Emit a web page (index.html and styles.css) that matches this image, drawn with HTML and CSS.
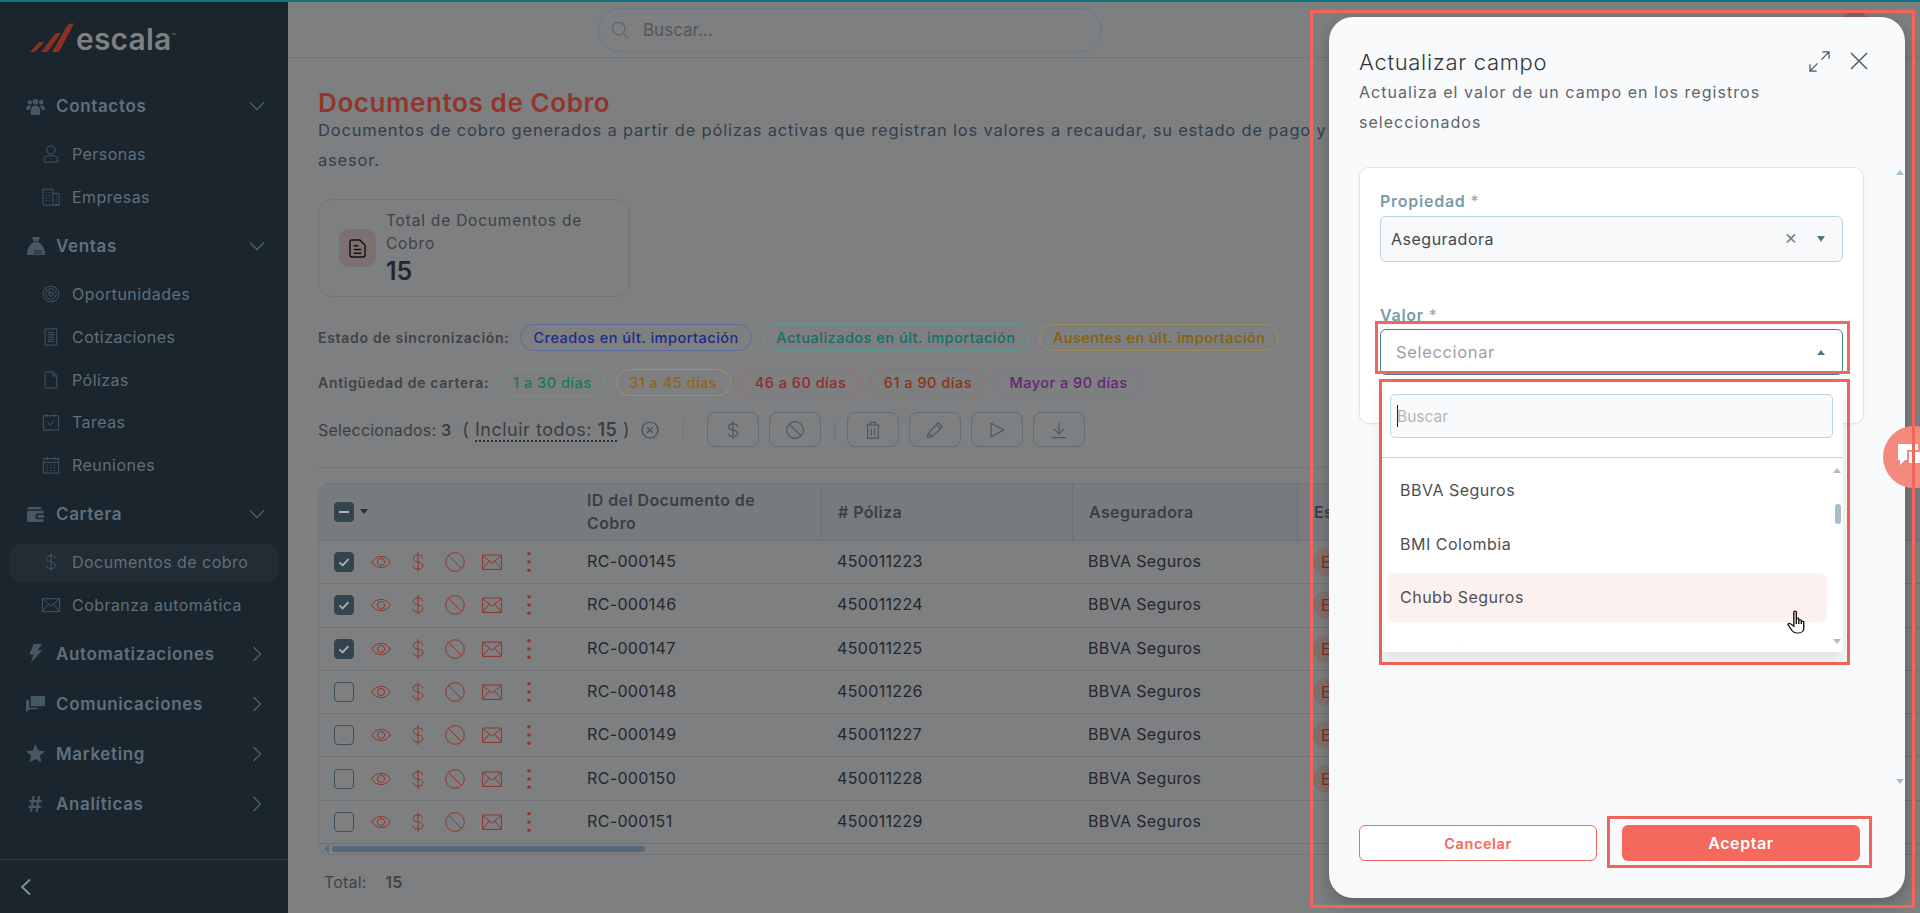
FILE: index.html
```html
<!DOCTYPE html>
<html lang="es">
<head>
<meta charset="utf-8">
<title>Documentos de Cobro</title>
<link rel="stylesheet" href="styles.css">
</head>
<body>
<svg class="sprite" aria-hidden="true">
  <symbol id="i-eye" viewBox="0 0 20 20"><path d="M.7 10C3 6.200 6.200 4.400 10 4.400s7 1.800 9.300 5.600c-2.300 3.800-5.500 5.600-9.300 5.600S3 13.800.7 10z"/><circle cx="10" cy="10" r="3.600"/></symbol>
  <symbol id="i-dollar" viewBox="0 0 20 20"><path d="M14.800 6.200C14.500 3.900 12.500 2.900 10 2.900c-2.700 0-4.800 1.300-4.800 3.500 0 2.300 2 3 4.800 3.600 2.900.6 5 1.400 5 3.700 0 2.300-2.200 3.500-5 3.500-2.700 0-4.800-1.200-5.100-3.500M10 0v20"/></symbol>
  <symbol id="i-ban" viewBox="0 0 20 20"><circle cx="10" cy="10" r="9.300"/><path d="M3.500 3.500l13 13"/></symbol>
  <symbol id="i-mail" viewBox="0 0 20 20"><path d="M.6 3h18.800v14.400H.6zM.6 3.400L10 11.200l9.400-7.800M.8 17l6.400-7.800M19.200 17l-6.400-7.800"/></symbol>
  <symbol id="i-dots" viewBox="0 0 20 20"><circle cx="10" cy="1.800" r="1.800"/><circle cx="10" cy="10" r="1.800"/><circle cx="10" cy="18.200" r="1.800"/></symbol>
  <symbol id="i-chev-d" viewBox="0 0 16 10"><path d="M1 1.500l7 7 7-7"/></symbol>
  <symbol id="i-chev-r" viewBox="0 0 10 16"><path d="M1.500 1l7 7-7 7"/></symbol>
  <symbol id="i-check" viewBox="0 0 20 20"><path d="M5 10.500l3.400 3.300L15 6.800"/></symbol>
</svg>

<div class="top-accent"></div>
<div class="shell">
  <aside class="sidebar">
    <div class="logo">
      <svg class="logo-mark" viewBox="0 0 44 30"><path d="M0 29L9 19H14L7 27Q5.500 29 3 29zM11 29L25 11Q26 10 28 10H31L19 27Q17.500 29 15 29zM22 29L37 3Q38.500 .5 41 .5H44L30 27Q29 29 26 29z"/></svg>
      <span class="logo-word">escala</span><span class="logo-tm">™</span>
    </div>
    <nav class="nav">
      <a class="sec">
        <svg class="sec-ico" viewBox="0 0 20 20"><circle cx="4" cy="5.500" r="2.300"/><circle cx="16" cy="5.500" r="2.300"/><circle cx="10" cy="5" r="3"/><path d="M0 13c0-2.500 1.200-4 3.500-4 .7 0 1.300.1 1.800.4C4.500 10.500 4 12 4 13.500H0zM20 13c0-2.500-1.200-4-3.500-4-.7 0-1.300.1-1.800.4.800 1.100 1.300 2.600 1.300 4.100h4zM5 18v-3.500C5 11.500 7 9 10 9s5 2.500 5 5.500V18c0 .6-.4 1-1 1H6c-.6 0-1-.4-1-1z"/></svg>
        <span>Contactos</span><svg class="chev"><use href="#i-chev-d"/></svg>
      </a>
      <div class="group">
        <a class="sub"><svg class="sub-ico" viewBox="0 0 20 20"><circle cx="10" cy="5.500" r="4.500"/><path d="M2.500 19v-3c0-2.500 1.500-4 4-4h7c2.500 0 4 1.500 4 4v3z"/></svg><span>Personas</span></a>
        <a class="sub"><svg class="sub-ico" viewBox="0 0 20 20"><path d="M1 19V1.500h11V19M12 6h7v13H12M1 19h18M4 5h1.500M7.500 5H9M4 8h1.500M7.500 8H9M4 11h1.500M7.500 11H9M4 14h1.500M7.500 14H9M15 9h1.500M15 12h1.500M15 15h1.500"/></svg><span>Empresas</span></a>
      </div>
      <a class="sec">
        <svg class="sec-ico wide" viewBox="0 0 22 20"><path d="M6.500 0h9l-2 5h-5zM8 6h6c3.500 2 6.500 6 7 13.500 0 .3-.2.500-.5.500h-19c-.3 0-.5-.2-.5-.5C1.500 12 4.500 8 8 6z"/><path class="coin" d="M8.500 15.500h9M8.500 18h9"/></svg>
        <span>Ventas</span><svg class="chev"><use href="#i-chev-d"/></svg>
      </a>
      <div class="group">
        <a class="sub"><svg class="sub-ico" viewBox="0 0 20 20"><circle cx="10" cy="10" r="8.800"/><circle cx="10" cy="10" r="5.800"/><circle cx="10" cy="10" r="2.500"/><path d="M10 10L2.500 2.500"/></svg><span>Oportunidades</span></a>
        <a class="sub"><svg class="sub-ico" viewBox="0 0 20 20"><path d="M3.500 1h13v18h-13zM6.500 5h7M6.500 7.500h7M6.500 10h7M6.500 12.500h7M6.500 15h7"/></svg><span>Cotizaciones</span></a>
        <a class="sub"><svg class="sub-ico" viewBox="0 0 20 20"><path d="M3.500 1h8.500l4.500 4.500V19h-13zM12 1v4.500h4.500"/></svg><span>Pólizas</span></a>
        <a class="sub"><svg class="sub-ico" viewBox="0 0 20 20"><path d="M1.500 3h17v16h-17zM6 1v3.500M14 1v3.500M6.500 11l2.500 2.500 4.500-5"/></svg><span>Tareas</span></a>
        <a class="sub"><svg class="sub-ico" viewBox="0 0 20 20"><path d="M1.500 3h17v16h-17zM1.500 7h17M6 1v3.500M14 1v3.500M5 10h1.500M9 10h1.500M13 10h1.500M5 13h1.500M9 13h1.500M13 13h1.500M5 16h1.500M9 16h1.500M13 16h1.500"/></svg><span>Reuniones</span></a>
      </div>
      <a class="sec">
        <svg class="sec-ico" viewBox="0 0 20 20"><path d="M1 4.500C1 3 2 2 3.500 2H16v2.500H1zM1 6h17.500v3H13a3 3 0 000 6h5.500v3H2.500C1.500 18 1 17.500 1 16.500zM13.500 10.500h5.500v3h-5.500a1.500 1.500 0 010-3z"/></svg>
        <span>Cartera</span><svg class="chev"><use href="#i-chev-d"/></svg>
      </a>
      <div class="group">
        <a class="sub active"><svg class="sub-ico"><use href="#i-dollar"/></svg><span>Documentos de cobro</span></a>
        <a class="sub"><svg class="sub-ico"><use href="#i-mail"/></svg><span>Cobranza automática</span></a>
      </div>
      <a class="sec">
        <svg class="sec-ico" viewBox="0 0 20 20"><path d="M8 0h9l-5 6.500h5L5 20l3-9H3.500z"/></svg>
        <span>Automatizaciones</span><svg class="chev right"><use href="#i-chev-r"/></svg>
      </a>
      <a class="sec">
        <svg class="sec-ico" viewBox="0 0 20 20"><path d="M5 2h15v11H8.500L5 13zM3.500 6v8.500h9V16H4L0 19V6z"/></svg>
        <span>Comunicaciones</span><svg class="chev right"><use href="#i-chev-r"/></svg>
      </a>
      <a class="sec">
        <svg class="sec-ico" viewBox="0 0 20 20"><path d="M10 0l3 6.800 7 .7-5.300 4.700L16.200 19.500 10 15.800 3.800 19.500l1.500-7.300L0 7.500l7-.7z"/></svg>
        <span>Marketing</span><svg class="chev right"><use href="#i-chev-r"/></svg>
      </a>
      <a class="sec">
        <span class="hash">#</span>
        <span>Analíticas</span><svg class="chev right"><use href="#i-chev-r"/></svg>
      </a>
    </nav>
    <div class="side-foot"><svg class="collapse" viewBox="0 0 12 18"><path d="M10 1.500L2 9l8 7.500"/></svg></div>
  </aside>

  <main class="main">
    <header class="topbar">
      <div class="search">
        <svg class="search-ico" viewBox="0 0 20 20"><circle cx="8.500" cy="8.500" r="7"/><path d="M13.800 13.800L19 19"/></svg>
        <span>Buscar...</span>
      </div>
      <div class="avatar"></div>
    </header>
    <section class="content">
      <h1 class="page-title">Documentos de Cobro</h1>
      <p class="page-desc">Documentos de cobro generados a partir de pólizas activas que registran los valores a recaudar, su estado de pago y<br>asesor.</p>

      <div class="stat">
        <div class="stat-ico"><svg viewBox="0 0 18 20"><path d="M2.500 1h9L17 6.500V17c0 1.200-.8 2-2 2H3c-1.200 0-2-.8-2-2V3c0-1.200.5-2 1.500-2zM5 7h5M5 11h8M5 15h8"/></svg></div>
        <div class="stat-body">
          <div class="stat-label">Total de Documentos de Cobro</div>
          <div class="stat-num">15</div>
        </div>
      </div>

      <div class="filter-row first">
        <b class="filter-label">Estado de sincronización:</b>
        <span class="pill p-blue">Creados en últ. importación</span>
        <span class="pill p-teal">Actualizados en últ. importación</span>
        <span class="pill p-amber">Ausentes en últ. importación</span>
      </div>
      <div class="filter-row second">
        <b class="filter-label">Antigüedad de cartera:</b>
        <span class="pill p-green">1 a 30 días</span>
        <span class="pill p-orange">31 a 45 días</span>
        <span class="pill p-red">46 a 60 días</span>
        <span class="pill p-brick">61 a 90 días</span>
        <span class="pill p-purple">Mayor a 90 días</span>
      </div>

      <div class="actions-row">
        <span class="sel-text">Seleccionados: <b>3</b></span>
        <span class="sel-all">( <u>Incluir todos: <b>15</b></u> )</span>
        <svg class="sel-x" viewBox="0 0 18 18"><circle cx="9" cy="9" r="8"/><path d="M6.200 6.200l5.600 5.600M11.800 6.200l-5.600 5.600"/></svg>
        <i class="vsep first-sep"></i>
        <button class="tool"><svg><use href="#i-dollar"/></svg></button>
        <button class="tool"><svg><use href="#i-ban"/></svg></button>
        <i class="vsep"></i>
        <button class="tool"><svg viewBox="0 0 20 20"><path d="M2.500 4.500h15M7 4.500V1.500h6v3M4 4.500h12V19H4zM8 8v8M12 8v8"/></svg></button>
        <button class="tool"><svg viewBox="0 0 20 20"><path d="M1.500 18.500l1-5L13.500 2l4.500 4.500L7 17.500zM11.500 4l4.500 4.500M2.500 13.500l4.500 4"/></svg></button>
        <button class="tool"><svg viewBox="0 0 20 20"><path d="M3.500 2.500v15l14-7.500z"/></svg></button>
        <button class="tool"><svg viewBox="0 0 20 20"><path d="M10 2v12M4.500 9l5.500 5.500L15.500 9M2.500 18.500h15"/></svg></button>
      </div>
      <hr class="rule">

      <div class="table">
        <div class="thead">
          <div class="th th-act"><span class="cb cb-on"><i class="minus"></i></span><i class="caret"></i></div>
          <div class="th">ID del Documento de Cobro</div>
          <div class="th sep"># Póliza</div>
          <div class="th sep">Aseguradora</div>
          <div class="th sep">Estado</div>
        </div>
        <div class="row">
          <div class="td-act"><span class="cb cb-on"><svg><use href="#i-check"/></svg></span><svg class="ra"><use href="#i-eye"/></svg><svg class="ra"><use href="#i-dollar"/></svg><svg class="ra"><use href="#i-ban"/></svg><svg class="ra"><use href="#i-mail"/></svg><svg class="ra dots"><use href="#i-dots"/></svg></div>
          <div class="td">RC-000145</div><div class="td">450011223</div><div class="td">BBVA Seguros</div><div class="td"><span class="badge">Emitido</span></div>
        </div>
        <div class="row">
          <div class="td-act"><span class="cb cb-on"><svg><use href="#i-check"/></svg></span><svg class="ra"><use href="#i-eye"/></svg><svg class="ra"><use href="#i-dollar"/></svg><svg class="ra"><use href="#i-ban"/></svg><svg class="ra"><use href="#i-mail"/></svg><svg class="ra dots"><use href="#i-dots"/></svg></div>
          <div class="td">RC-000146</div><div class="td">450011224</div><div class="td">BBVA Seguros</div><div class="td"><span class="badge">Emitido</span></div>
        </div>
        <div class="row">
          <div class="td-act"><span class="cb cb-on"><svg><use href="#i-check"/></svg></span><svg class="ra"><use href="#i-eye"/></svg><svg class="ra"><use href="#i-dollar"/></svg><svg class="ra"><use href="#i-ban"/></svg><svg class="ra"><use href="#i-mail"/></svg><svg class="ra dots"><use href="#i-dots"/></svg></div>
          <div class="td">RC-000147</div><div class="td">450011225</div><div class="td">BBVA Seguros</div><div class="td"><span class="badge">Emitido</span></div>
        </div>
        <div class="row">
          <div class="td-act"><span class="cb"></span><svg class="ra"><use href="#i-eye"/></svg><svg class="ra"><use href="#i-dollar"/></svg><svg class="ra"><use href="#i-ban"/></svg><svg class="ra"><use href="#i-mail"/></svg><svg class="ra dots"><use href="#i-dots"/></svg></div>
          <div class="td">RC-000148</div><div class="td">450011226</div><div class="td">BBVA Seguros</div><div class="td"><span class="badge">Emitido</span></div>
        </div>
        <div class="row">
          <div class="td-act"><span class="cb"></span><svg class="ra"><use href="#i-eye"/></svg><svg class="ra"><use href="#i-dollar"/></svg><svg class="ra"><use href="#i-ban"/></svg><svg class="ra"><use href="#i-mail"/></svg><svg class="ra dots"><use href="#i-dots"/></svg></div>
          <div class="td">RC-000149</div><div class="td">450011227</div><div class="td">BBVA Seguros</div><div class="td"><span class="badge">Emitido</span></div>
        </div>
        <div class="row">
          <div class="td-act"><span class="cb"></span><svg class="ra"><use href="#i-eye"/></svg><svg class="ra"><use href="#i-dollar"/></svg><svg class="ra"><use href="#i-ban"/></svg><svg class="ra"><use href="#i-mail"/></svg><svg class="ra dots"><use href="#i-dots"/></svg></div>
          <div class="td">RC-000150</div><div class="td">450011228</div><div class="td">BBVA Seguros</div><div class="td"><span class="badge">Emitido</span></div>
        </div>
        <div class="row">
          <div class="td-act"><span class="cb"></span><svg class="ra"><use href="#i-eye"/></svg><svg class="ra"><use href="#i-dollar"/></svg><svg class="ra"><use href="#i-ban"/></svg><svg class="ra"><use href="#i-mail"/></svg><svg class="ra dots"><use href="#i-dots"/></svg></div>
          <div class="td">RC-000151</div><div class="td">450011229</div><div class="td">BBVA Seguros</div><div class="td"></div>
        </div>
        <div class="hscroll"><i class="hs-arrow"></i><i class="hs-thumb"></i></div>
      </div>
      <div class="total">Total: <b>15</b></div>
    </section>
  </main>
</div>

<div class="modal">
  <div class="modal-head">
    <div>
      <h2 class="modal-title">Actualizar campo</h2>
      <p class="modal-sub">Actualiza el valor de un campo en los registros seleccionados</p>
    </div>
    <div class="modal-tools">
      <svg class="mt-expand" viewBox="0 0 22 22"><path d="M13 9l8-8M14 1h7v7M9 13l-8 8M1 14v7h7"/></svg>
      <svg class="mt-close" viewBox="0 0 18 18"><path d="M1 1l16 16M17 1L1 17"/></svg>
    </div>
  </div>
  <div class="modal-body">
    <div class="card">
      <label class="f-label">Propiedad <em>*</em></label>
      <div class="select">
        <span>Aseguradora</span>
        <span class="sel-clear">×</span>
        <i class="tri-d"></i>
      </div>
      <label class="f-label valor">Valor <em>*</em></label>
      <div class="field-wrap">
        <div class="select open">
          <span class="ph">Seleccionar</span>
          <i class="tri-u"></i>
        </div>
        <div class="dropdown">
          <div class="dd-search"><div class="dd-input"><i class="caret-bar"></i><span>Buscar</span></div></div>
          <div class="dd-list">
            <div class="dd-item">BBVA Seguros</div>
            <div class="dd-item">BMI Colombia</div>
            <div class="dd-item hover">Chubb Seguros</div>
            <div class="dd-item">Colpatria</div>
            <i class="dd-up"></i><i class="dd-thumb"></i><i class="dd-down"></i>
          </div>
        </div>
      </div>
    </div>
    <i class="m-up"></i><i class="m-down"></i>
  </div>
  <div class="modal-foot">
    <button class="btn btn-ghost">Cancelar</button>
    <button class="btn btn-solid">Aceptar</button>
  </div>
</div>

<div class="fab">
  <svg viewBox="0 0 34 26"><path d="M1 1h20v16H8l-5 5v-5H1z" class="fab-a"/><path d="M11 8h21v13H11z" class="fab-b"/></svg>
</div>

<svg class="pointer" viewBox="0 0 14.500 24" preserveAspectRatio="none"><path d="M5.500 2C5.500 .7 7.500 .7 7.500 2V10V9C7.500 7.800 9.500 7.800 9.500 9V10.500C9.500 9.400 11.500 9.400 11.500 10.500V12C11.500 11 13.500 11 13.500 12V18.500C13.500 21 11.700 23 9 23H8C6 23 5 22.100 4 20.500L1 15C.3 13.700 1.900 12.700 2.900 13.800L5.500 16.200zM7.500 10V14M9.500 10.500V14M11.500 12V14"/></svg>

<div class="mark mark-modal"></div>
<div class="mark mark-valor"></div>
<div class="mark mark-drop"></div>
<div class="mark mark-accept"></div>
</body>
</html>
```

FILE: styles.css
```css
* { box-sizing: border-box; }
html, body { margin: 0; height: 100%; }
body {
  width: 1920px;
  height: 913px;
  overflow: hidden;
  position: relative;
  background: #7f7f80;
  color: #33383d;
  font-family: Inter, "Open Sans", "Liberation Sans", sans-serif;
  font-size: 16px;
}
.sprite { display: none; }
.top-accent { height: 2px; background: #10757c; }
.shell { display: flex; height: 911px; }

/* sidebar */
.sidebar { width: 288px; flex: none; background: #1a252e; display: flex; flex-direction: column; }
.logo { height: 79px; padding: 21px 0 0 30px; display: flex; align-items: flex-start; }
.logo-mark { width: 44px; height: 30px; fill: #8f2f22; flex: none; }
.logo-word { margin-left: 2px; font-size: 30px; line-height: 32px; font-weight: 600; color: #7f8080; letter-spacing: .2px; }
.logo-tm { font-size: 7px; line-height: 12px; margin-top: 8px; color: #7f8080; }
.nav { display: flex; flex-direction: column; }
.sec { height: 50px; display: flex; align-items: center; padding-left: 26px; color: #5f717d; font-size: 17px; letter-spacing: .65px; font-weight: 600; }
.sec-ico { width: 19px; height: 19px; fill: #465863; flex: none; margin-right: 11px; }
.sec-ico.wide { width: 20px; height: 20px; margin-right: 10px; }
.coin { fill: none; stroke: #1a252e; stroke-width: 1.200; }
.hash { width: 19px; margin-right: 11px; font-size: 22px; font-weight: 600; color: #465863; text-align: center; }
.chev { width: 16px; height: 10px; margin-left: auto; margin-right: 23px; fill: none; stroke: #4e5f6a; stroke-width: 1.4; }
.chev.right { width: 10px; height: 16px; margin-right: 26px; }
.group { padding: 2px 0 2.600px; display: flex; flex-direction: column; }
.sub { height: 42.700px; display: flex; align-items: center; padding-left: 42px; color: #616f79; font-size: 16px; letter-spacing: .45px; margin: 0 10px 0 0; }
.sub-ico { width: 18px; height: 18px; fill: none; stroke: #4a5a65; stroke-width: 1; flex: none; margin-right: 12px; }
.sub.active { position: relative; z-index: 0; }
.sub.active::before { content: ""; position: absolute; z-index: -1; left: 10px; right: 0; top: 3px; bottom: 2px; border-radius: 10px; background: #212c35; }
.side-foot { margin-top: auto; height: 54px; border-top: 1px solid #2c3842; display: flex; align-items: center; padding-left: 20px; }
.collapse { width: 12px; height: 18px; fill: none; stroke: #85939c; stroke-width: 1.800; }

/* main */
.main { flex: 1; min-width: 0; display: flex; flex-direction: column; background: #7e7f80; }
.topbar { height: 56px; flex: none; border-bottom: 1px solid #727578; padding: 6px 47px 0 310px; display: flex; align-items: flex-start; }
.search { width: 504px; height: 44px; border: 1.5px solid #667a88; border-radius: 22px; display: flex; align-items: center; padding-left: 12px; color: #53585c; font-size: 17px; }
.search-ico { width: 18px; height: 18px; fill: none; stroke: #5d666c; stroke-width: 1.300; margin-right: 14px; }
.avatar { margin-left: auto; width: 36px; height: 36px; margin-top: 4px; border-radius: 50%; background: #85645f; }
.content { padding: 29px 0 0 30px; flex: 1; min-height: 0; }
.page-title { margin: 0; height: 28px; font-size: 26px; line-height: 32px; letter-spacing: .6px; font-weight: 600; color: #93352a; }
.page-desc { margin: 0; font-size: 16.500px; line-height: 30px; letter-spacing: .8px; color: #343f4a; white-space: nowrap; }
.stat { margin-top: 24px; width: 312px; height: 98px; border: 1px solid #727578; border-radius: 14px; display: flex; align-items: center; padding-left: 20px; }
.stat-ico { width: 37px; height: 38px; border-radius: 9px; background: #7d7070; display: flex; align-items: center; justify-content: center; flex: none; }
.stat-ico svg { width: 17px; height: 19px; fill: none; stroke: #111; stroke-width: 1.500; }
.stat-body { margin-left: 10px; width: 210px; }
.stat-label { font-size: 15.500px; letter-spacing: .8px; line-height: 23px; color: #3e4246; }
.stat-num { font-size: 25px; line-height: 32px; font-weight: 600; color: #24282b; }

.filter-row { display: flex; align-items: center; }
.filter-row.first { margin-top: 27px; gap: 10.500px; }
.filter-row.second { margin-top: 18px; gap: 10.500px; }
.filter-label { font-size: 14px; letter-spacing: .7px; font-weight: 600; color: #3f4347; white-space: nowrap; }
.pill { height: 27px; border: 1px solid; border-radius: 14px; display: inline-flex; align-items: center; padding: 0 12.500px; font-size: 14.500px; letter-spacing: .5px; font-weight: 500; white-space: nowrap; }
.p-blue { color: #1c2c88; border-color: #5a6a9c; }
.p-teal { color: #137068; border-color: #5c9a96; }
.p-amber { color: #86600c; border-color: #a08d5e; }
.p-green { color: #187a52; border-color: #5e9a84; }
.p-orange { color: #956415; border-color: #ad8d60; }
.p-red { color: #962a28; border-color: #a86a6a; }
.p-brick { color: #8a3318; border-color: #a5695a; }
.p-purple { color: #652578; border-color: #8f6a9f; }

.actions-row { margin-top: 16px; height: 35px; display: flex; align-items: center; color: #3a3e42; font-size: 16px; }
.sel-text { letter-spacing: .2px; white-space: nowrap; }
.sel-text b, .sel-all b { font-weight: 600; }
.sel-all { margin-left: 11px; font-size: 18px; letter-spacing: .5px; white-space: nowrap; }
.sel-all u { text-decoration: none; border-bottom: 2px dotted #2d3135; }
.sel-x { width: 18px; height: 18px; margin-left: 11px; flex: none; fill: none; stroke: #3f4c56; stroke-width: 1.200; }
.vsep { width: 1px; height: 20px; flex: none; background: #68757d; margin: 0 12px 0 3px; }
.first-sep { margin: 0 23px 0 24px; }
.tool { width: 52px; height: 35px; flex: none; padding: 0; margin-right: 10px; background: none; border: 1px solid #5f6e78; border-radius: 8px; display: flex; align-items: center; justify-content: center; }
.tool svg { width: 18px; height: 18px; fill: none; stroke: #47565f; stroke-width: 1.200; }
.rule { margin: 20px 0 0; border: 0; border-top: 1px solid #727578; }

/* table */
.table { margin-top: 15px; width: 1640px; height: 372px; border: 1px solid #6f7376; border-radius: 12px 0 0 12px; overflow: hidden; position: relative; }
.thead { display: grid; grid-template-columns: 253px 249px 251px 225px 1fr; height: 57px; background: #777b7f; border-bottom: 1px solid #6c7276; }
.th { display: flex; align-items: center; padding: 0 15px; font-size: 16px; letter-spacing: .4px; line-height: 23px; font-weight: 600; color: #3b3f43; }
.th.sep { border-left: 1px solid #6a6f73; padding-left: 16px; }
.th-act { gap: 6px; padding-left: 15px; }
.cb { width: 20px; height: 20px; flex: none; border: 1px solid #3a505c; border-radius: 4px; display: flex; align-items: center; justify-content: center; }
.cb-on { background: #33444f; border-color: #33444f; }
.cb svg { width: 20px; height: 20px; fill: none; stroke: #a9afb3; stroke-width: 2; }
.minus { width: 10px; height: 2px; background: #a9afb3; }
.caret { width: 0; height: 0; border-left: 4.500px solid transparent; border-right: 4.500px solid transparent; border-top: 5px solid #2d3135; margin-top: -2px; }
.row { display: grid; grid-template-columns: 253px 249px 251px 225px 1fr; height: 43.290px; border-bottom: 1px solid #6f7274; font-size: 16px; letter-spacing: .35px; color: #22282e; }
.td-act { display: grid; grid-template-columns: repeat(6, 20px); column-gap: 17px; align-items: center; padding-left: 15px; }
.ra { width: 20px; height: 20px; fill: none; stroke: #93352a; stroke-width: 1; }
.dots { fill: #93352a; stroke: none; }
.td { display: flex; align-items: center; padding: 0 0 2px 15px; }
.td + .td { padding-left: 16px; }
.badge { height: 28px; display: inline-flex; align-items: center; padding: 0 8px; border-radius: 14px; background: #80726f; color: #8a2a20; margin-top: 2px; }
.hscroll { height: 11px; display: flex; align-items: center; padding-left: 5px; }
.hs-arrow { width: 0; height: 0; border-top: 4px solid transparent; border-bottom: 4px solid transparent; border-right: 5px solid #5a6a74; }
.hs-thumb { width: 313px; height: 6px; margin-left: 3px; border-radius: 3px; background: #56697a; }
.total { margin: 17px 0 0 6px; color: #3f4347; font-size: 16px; letter-spacing: .2px; }
.total b { margin-left: 14px; font-weight: 600; }

/* modal */
.modal { position: absolute; left: 1329px; top: 17px; width: 576px; height: 881px; background: #f9fafc; border-radius: 24px; box-shadow: 0 6px 18px rgba(0,0,0,.25); display: flex; flex-direction: column; padding: 30px 0 37px 30px; }
.modal-head { display: flex; justify-content: space-between; height: 120px; flex: none; }
.modal-title { margin: 0; font-size: 22px; letter-spacing: .7px; line-height: 30px; font-weight: 300; color: #33373b; }
.modal-sub { margin: 0; width: 440px; font-size: 16px; letter-spacing: 1.030px; line-height: 30px; color: #60656b; }
.modal-tools { display: flex; gap: 20px; padding: 4px 37px 0 0; }
.mt-expand { width: 21px; height: 21px; fill: none; stroke: #4e5a62; stroke-width: 1.300; }
.mt-close { width: 18px; height: 18px; margin-top: 1px; fill: none; stroke: #4e5a62; stroke-width: 1.500; }
.modal-body { flex: 1; position: relative; min-height: 0; }
.card { width: 505px; height: 257px; background: #fff; border: 1px solid #e2e5e8; border-radius: 10px; padding: 22px 20px 0; box-shadow: 0 1px 3px rgba(0,0,0,.05); }
.f-label { display: block; height: 22px; margin-bottom: 4px; font-size: 16px; letter-spacing: .75px; line-height: 22px; font-weight: 600; color: #7b9bab; }
.f-label em { font-style: normal; font-weight: 400; color: #8ea6b3; }
.f-label.valor { margin: 42px 0 3px; }
.select { height: 46px; border: 1px solid #bad3e0; border-radius: 6px; background: #f7f9fb; display: flex; align-items: center; padding: 0 17px 0 10px; color: #43484d; font-size: 16px; letter-spacing: .5px; }
.sel-clear { margin-left: auto; margin-right: 19px; font-size: 20px; line-height: 20px; margin-top: -4px; color: #7c8488; }
.tri-d { width: 0; height: 0; border-left: 4px solid transparent; border-right: 4px solid transparent; border-top: 6px solid #5a7686; }
.select.open { background: #fff; border-color: #4a7f90; padding-left: 15px; justify-content: space-between; }
.ph { color: #9b9fa3; font-size: 16.500px; letter-spacing: .65px; }
.tri-u { width: 0; height: 0; border-left: 4px solid transparent; border-right: 4px solid transparent; border-bottom: 5px solid #5a7686; }
.field-wrap { position: relative; }
.dropdown { position: absolute; left: 2px; top: 53px; width: 461px; height: 270px; background: #fff; border-radius: 4px; box-shadow: 0 8px 14px rgba(0,0,0,.10); padding-bottom: 7px; display: flex; flex-direction: column; z-index: 2; }
.dd-search { height: 76px; flex: none; border-bottom: 1px solid #cfd1d3; padding: 12px 10px 0 8px; }
.dd-input { height: 44px; border: 1px solid #bad8e6; border-radius: 5px; background: #f8fafc; display: flex; align-items: center; padding-left: 6px; color: #b3b6b9; font-size: 15.500px; position: relative; }
.caret-bar { position: absolute; left: 6px; top: 10px; width: 1px; height: 22px; background: #222; }
.dd-list { flex: 1; min-height: 0; overflow: hidden; position: relative; padding: 7.500px 0 0 5px; }
.dd-item { width: 440px; height: 49px; margin-bottom: 4.500px; padding-left: 13px; display: flex; align-items: center; border-radius: 8px; color: #4d5053; font-size: 16px; letter-spacing: .5px; }
.dd-item.hover { background: #fdf1ef; }
.dd-up, .dd-down, .m-up, .m-down { position: absolute; width: 0; height: 0; border-left: 4px solid transparent; border-right: 4px solid transparent; }
.dd-up { right: 2px; top: 10px; border-bottom: 5px solid #a7bfcb; }
.dd-down { right: 2px; top: 181px; border-top: 5px solid #a7bfcb; }
.dd-thumb { position: absolute; right: 2px; top: 46px; width: 6px; height: 20px; border-radius: 3px; background: #a7bfcb; }
.m-up { left: 537px; top: 3px; border-bottom: 5px solid #a7bfcb; }
.m-down { left: 537px; top: 612px; border-top: 5px solid #a7bfcb; }
.modal-foot { flex: none; display: flex; gap: 25px; height: 36px; }
.btn { width: 238px; height: 36px; border-radius: 6px; font: 600 14.500px Inter, "Liberation Sans", sans-serif; letter-spacing: .6px; }
.btn-ghost { background: #fff; border: 1px solid #f4695c; color: #f4695c; }
.btn-solid { background: #f4695c; border: 0; color: #fff; font-size: 16px; }

/* overlays */
.fab { position: absolute; left: 1883px; top: 426px; width: 62px; height: 62px; border-radius: 50%; background: #f48a7d; }
.fab svg { position: absolute; left: 14px; top: 17px; width: 34px; height: 26px; }
.fab-a { fill: #fff; }
.fab-b { fill: #fff; stroke: #f48a7d; stroke-width: 2; }
.pointer { position: absolute; left: 1787px; top: 610px; width: 18px; height: 24px; z-index: 5; fill: #fff; stroke: #111; stroke-width: 1.100; }
.mark { position: absolute; border: 3px solid #f2655a; pointer-events: none; }
.mark-modal { left: 1310px; top: 10px; width: 605px; height: 898px; }
.mark-valor { left: 1375px; top: 321px; width: 475px; height: 53px; }
.mark-drop { left: 1379px; top: 379px; width: 471px; height: 286px; }
.mark-accept { left: 1607px; top: 816px; width: 265px; height: 52px; }
```
